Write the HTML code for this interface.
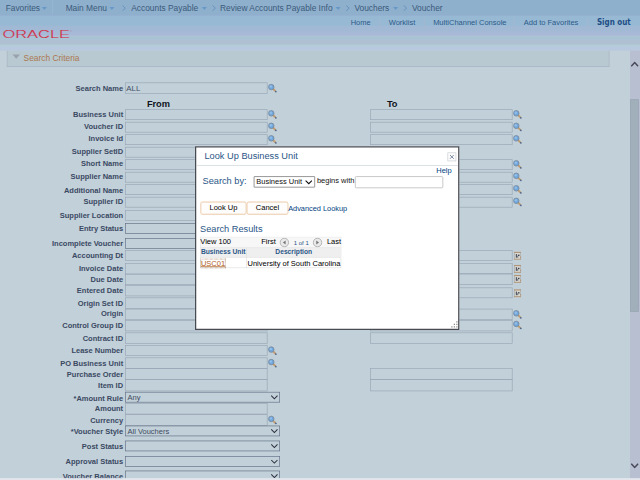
<!DOCTYPE html>
<html><head><meta charset="utf-8"><title>Voucher</title>
<style>
html,body{margin:0;padding:0;width:640px;height:480px;overflow:hidden;background:#c1d0d9}
#s{position:absolute;left:0;top:0;width:1024px;height:768px;transform:scale(.625);transform-origin:0 0;overflow:hidden;font-family:"Liberation Sans",Arial,sans-serif;font-size:12px;background:#c1d0d9}
#s *{box-sizing:border-box}
#hd{position:absolute;left:0;top:0;width:1024px;height:81px;background:linear-gradient(#8fb0cc 0,#8fb0cc 24px,#97b1d3 25px,#98b9d4 26.5px,#98b9d4 40px,#a1b9d4 43px,#a3b9d5 50px,#a8b9d7 53px,#a9b9d8 56px,#adc3d8 57.5px,#aac3d4 59px,#aac3d4 63px,#afc0d2 65px,#b0c0d3 70.5px,#b3cdd8 72px,#b3cdd8 74px,#b8c8de 75.5px,#b8c8de 81px)}
#nav{position:absolute;left:0;top:0;height:23px;width:1024px;font-size:13.4px;color:#3b5a7c;white-space:nowrap}
#nav span{position:absolute;top:5px}
#nav i{position:absolute;top:11.3px;width:0;height:0;border-left:4.6px solid transparent;border-right:4.6px solid transparent;border-top:5px solid #6698ca}
#nav b{position:absolute;top:5px;font-weight:normal;color:#5a84ad}
#lnk{position:absolute;top:29px;left:0;width:1024px;font-size:12px;color:#2c5a8a;white-space:nowrap}
#lnk span{position:absolute;top:0}
#lnk u{position:absolute;top:0;width:1.2px;height:15px;background:#a9b7cb}
.lb{position:absolute;left:0;width:197px;text-align:right;font-weight:bold;color:#3b4963;white-space:nowrap;line-height:14px}
.in{position:absolute;width:228px;height:17.4px;border:1.25px solid #98a3b4;color:#445066;line-height:18px;padding-left:1px;font-size:12.6px;overflow:hidden}
.se{position:absolute;width:248px;height:17px;border:1px solid #5f6a80;color:#3f4a60;line-height:16px;padding-left:3px;font-size:12px}
.ch{position:absolute;right:2px;top:4.4px}
.ic{position:absolute}
.hd2{position:absolute;font-weight:bold;font-size:14.8px;color:#10131c;top:158.2px}
#sc{position:absolute;left:11px;top:81px;width:964px;height:26px;background:#b9c9d1;border-left:1px solid #a9b3c4;border-bottom:1px solid #a3adc0;border-right:1px solid #a9b3c4}
#sc span{position:absolute;left:25.8px;top:4.6px;font-size:13.4px;color:#ab7850}
#sc i{position:absolute;left:8px;top:5.6px;width:0;height:0;border-left:6.5px solid transparent;border-right:6.5px solid transparent;border-top:7.5px solid #98a2ae}
#sb{position:absolute;left:1008px;top:81px;width:16px;height:687px;background:#b8bfd1}
#th{position:absolute;left:0px;top:77.5px;width:14.4px;height:340.3px;background:#a0afb9;border:1.2px solid #98a4b4}
#bt{position:absolute;left:0;top:764.8px;width:1024px;height:3.2px;background:#e3e5ec}
#dl{position:absolute;left:312px;top:234px;width:423px;height:294px;background:#fff;border:2px solid #484b52;color:#000}
#dl .ti{position:absolute;left:13.2px;top:6px;font-size:14.75px;color:#2a5687}
#dl .sep{position:absolute;left:0;top:28px;width:419px;height:1px;background:#c9d2d6}
#dl .x{position:absolute;left:402px;top:8px;width:14px;height:14px;border:1px solid #c8ccd2;background:#fbfbfb}
#dl a{color:#00427f;text-decoration:none}
.bt{position:absolute;height:20px;border:1px solid #e9c7a3;border-radius:3px;background:#fffdfb;text-align:center;line-height:17px;font-size:12px;color:#000;box-shadow:0 0 0 .5px #f3dcc4}
#tb{position:absolute;left:6px;top:143px;width:226px;height:50px;border:1px solid #dcdcdc}
</style></head><body>
<div id="s">
<div id="hd">
 <div id="nav">
  <span style="left:9px">Favorites</span><i style="left:67px"></i>
  <b style="left:84px;top:0;width:1px;height:23px;background:#9bbad6"></b>
  <span style="left:105px">Main Menu</span><i style="left:175px"></i>
  <svg style="position:absolute;left:194.5px;top:8.3px" width="7" height="10" viewBox="0 0 7 10"><path d="M1 0.8 L5.6 5 L1 9.2" fill="none" stroke="#5f8bb8" stroke-width="1.3"/></svg><span style="left:210px">Accounts Payable</span><i style="left:323px"></i>
  <svg style="position:absolute;left:338.5px;top:8.3px" width="7" height="10" viewBox="0 0 7 10"><path d="M1 0.8 L5.6 5 L1 9.2" fill="none" stroke="#5f8bb8" stroke-width="1.3"/></svg><span style="left:352px">Review Accounts Payable Info</span><i style="left:537px"></i>
  <svg style="position:absolute;left:552.5px;top:8.3px" width="7" height="10" viewBox="0 0 7 10"><path d="M1 0.8 L5.6 5 L1 9.2" fill="none" stroke="#5f8bb8" stroke-width="1.3"/></svg><span style="left:567px">Vouchers</span><i style="left:629px"></i>
  <svg style="position:absolute;left:644.5px;top:8.3px" width="7" height="10" viewBox="0 0 7 10"><path d="M1 0.8 L5.6 5 L1 9.2" fill="none" stroke="#5f8bb8" stroke-width="1.3"/></svg><span style="left:659px">Voucher</span>
 </div>
 <svg style="position:absolute;left:3px;top:45px" width="116" height="18" viewBox="0 0 116 18"><defs><linearGradient id="lg" x1="0" y1="0" x2="0" y2="1"><stop offset="0" stop-color="#a1b9d4"/><stop offset="1" stop-color="#aac3d4"/></linearGradient></defs><text x="1" y="15" font-family="Liberation Sans, Arial, sans-serif" font-size="18.5" fill="#d32841" stroke="url(#lg)" stroke-width="0.3" textLength="108" lengthAdjust="spacingAndGlyphs">ORACLE</text><text x="109" y="6" font-size="4" fill="#d32841" font-family="Liberation Sans, Arial, sans-serif">®</text></svg>
 <div id="lnk">
  <span style="left:561px">Home</span><u style="left:607px"></u>
  <span style="left:622px">Worklist</span><u style="left:678px"></u>
  <span style="left:693px">MultiChannel Console</span><u style="left:822px"></u>
  <span style="left:838px">Add to Favorites</span><u style="left:940px"></u>
  <span style="left:955px;top:-0.8px;font-family:'DejaVu Sans Condensed','DejaVu Sans',Verdana,sans-serif;font-weight:bold;font-size:12.8px;color:#1f4e86">Sign out</span>
 </div>
</div>
<div id="sc"><i></i><span>Search Criteria</span></div>
<div class="hd2" style="left:235px">From</div>
<div class="hd2" style="left:619px">To</div>
<div class="lb" style="top:134.8px">Search Name</div>
<div class="in" style="left:200px;top:132.1px;height:18px">ALL</div>
<svg class="ic" style="left:429px;top:133.3px" width="16" height="16" viewBox="0 0 16 16"><line x1="7.6" y1="9" x2="11.7" y2="12.9" stroke="#c09c70" stroke-width="3" stroke-linecap="round"/><line x1="12.1" y1="13.3" x2="12.5" y2="13.7" stroke="#4a6690" stroke-width="2.4" stroke-linecap="round"/><circle cx="5" cy="6.3" r="4.4" fill="#70a7dc" stroke="#7b899b" stroke-width="1.35"/><circle cx="4.3" cy="5.4" r="1.9" fill="#92bee8"/></svg>
<div class="lb" style="top:176.4px">Business Unit</div>
<div class="in" style="left:200px;top:175.1px;height:17.4px"></div>
<svg class="ic" style="left:429px;top:174.5px" width="16" height="16" viewBox="0 0 16 16"><line x1="7.6" y1="9" x2="11.7" y2="12.9" stroke="#c09c70" stroke-width="3" stroke-linecap="round"/><line x1="12.1" y1="13.3" x2="12.5" y2="13.7" stroke="#4a6690" stroke-width="2.4" stroke-linecap="round"/><circle cx="5" cy="6.3" r="4.4" fill="#70a7dc" stroke="#7b899b" stroke-width="1.35"/><circle cx="4.3" cy="5.4" r="1.9" fill="#92bee8"/></svg>
<div class="in" style="left:592px;top:175.1px;height:17.4px"></div>
<svg class="ic" style="left:821px;top:174.5px" width="16" height="16" viewBox="0 0 16 16"><line x1="7.6" y1="9" x2="11.7" y2="12.9" stroke="#c09c70" stroke-width="3" stroke-linecap="round"/><line x1="12.1" y1="13.3" x2="12.5" y2="13.7" stroke="#4a6690" stroke-width="2.4" stroke-linecap="round"/><circle cx="5" cy="6.3" r="4.4" fill="#70a7dc" stroke="#7b899b" stroke-width="1.35"/><circle cx="4.3" cy="5.4" r="1.9" fill="#92bee8"/></svg>
<div class="lb" style="top:195.4px">Voucher ID</div>
<div class="in" style="left:200px;top:195.1px;height:17.4px"></div>
<svg class="ic" style="left:429px;top:194.5px" width="16" height="16" viewBox="0 0 16 16"><line x1="7.6" y1="9" x2="11.7" y2="12.9" stroke="#c09c70" stroke-width="3" stroke-linecap="round"/><line x1="12.1" y1="13.3" x2="12.5" y2="13.7" stroke="#4a6690" stroke-width="2.4" stroke-linecap="round"/><circle cx="5" cy="6.3" r="4.4" fill="#70a7dc" stroke="#7b899b" stroke-width="1.35"/><circle cx="4.3" cy="5.4" r="1.9" fill="#92bee8"/></svg>
<div class="in" style="left:592px;top:195.1px;height:17.4px"></div>
<svg class="ic" style="left:821px;top:194.5px" width="16" height="16" viewBox="0 0 16 16"><line x1="7.6" y1="9" x2="11.7" y2="12.9" stroke="#c09c70" stroke-width="3" stroke-linecap="round"/><line x1="12.1" y1="13.3" x2="12.5" y2="13.7" stroke="#4a6690" stroke-width="2.4" stroke-linecap="round"/><circle cx="5" cy="6.3" r="4.4" fill="#70a7dc" stroke="#7b899b" stroke-width="1.35"/><circle cx="4.3" cy="5.4" r="1.9" fill="#92bee8"/></svg>
<div class="lb" style="top:215.4px">Invoice Id</div>
<div class="in" style="left:200px;top:215.1px;height:17.4px"></div>
<svg class="ic" style="left:429px;top:214.5px" width="16" height="16" viewBox="0 0 16 16"><line x1="7.6" y1="9" x2="11.7" y2="12.9" stroke="#c09c70" stroke-width="3" stroke-linecap="round"/><line x1="12.1" y1="13.3" x2="12.5" y2="13.7" stroke="#4a6690" stroke-width="2.4" stroke-linecap="round"/><circle cx="5" cy="6.3" r="4.4" fill="#70a7dc" stroke="#7b899b" stroke-width="1.35"/><circle cx="4.3" cy="5.4" r="1.9" fill="#92bee8"/></svg>
<div class="in" style="left:592px;top:215.1px;height:17.4px"></div>
<svg class="ic" style="left:821px;top:214.5px" width="16" height="16" viewBox="0 0 16 16"><line x1="7.6" y1="9" x2="11.7" y2="12.9" stroke="#c09c70" stroke-width="3" stroke-linecap="round"/><line x1="12.1" y1="13.3" x2="12.5" y2="13.7" stroke="#4a6690" stroke-width="2.4" stroke-linecap="round"/><circle cx="5" cy="6.3" r="4.4" fill="#70a7dc" stroke="#7b899b" stroke-width="1.35"/><circle cx="4.3" cy="5.4" r="1.9" fill="#92bee8"/></svg>
<div class="lb" style="top:235.4px">Supplier SetID</div>
<div class="in" style="left:200px;top:235.1px;height:17.4px"></div>
<svg class="ic" style="left:429px;top:234.5px" width="16" height="16" viewBox="0 0 16 16"><line x1="7.6" y1="9" x2="11.7" y2="12.9" stroke="#c09c70" stroke-width="3" stroke-linecap="round"/><line x1="12.1" y1="13.3" x2="12.5" y2="13.7" stroke="#4a6690" stroke-width="2.4" stroke-linecap="round"/><circle cx="5" cy="6.3" r="4.4" fill="#70a7dc" stroke="#7b899b" stroke-width="1.35"/><circle cx="4.3" cy="5.4" r="1.9" fill="#92bee8"/></svg>
<div class="lb" style="top:255px">Short Name</div>
<div class="in" style="left:200px;top:255.1px;height:17.4px"></div>
<svg class="ic" style="left:429px;top:254.5px" width="16" height="16" viewBox="0 0 16 16"><line x1="7.6" y1="9" x2="11.7" y2="12.9" stroke="#c09c70" stroke-width="3" stroke-linecap="round"/><line x1="12.1" y1="13.3" x2="12.5" y2="13.7" stroke="#4a6690" stroke-width="2.4" stroke-linecap="round"/><circle cx="5" cy="6.3" r="4.4" fill="#70a7dc" stroke="#7b899b" stroke-width="1.35"/><circle cx="4.3" cy="5.4" r="1.9" fill="#92bee8"/></svg>
<div class="in" style="left:592px;top:255.1px;height:17.4px"></div>
<svg class="ic" style="left:821px;top:254.5px" width="16" height="16" viewBox="0 0 16 16"><line x1="7.6" y1="9" x2="11.7" y2="12.9" stroke="#c09c70" stroke-width="3" stroke-linecap="round"/><line x1="12.1" y1="13.3" x2="12.5" y2="13.7" stroke="#4a6690" stroke-width="2.4" stroke-linecap="round"/><circle cx="5" cy="6.3" r="4.4" fill="#70a7dc" stroke="#7b899b" stroke-width="1.35"/><circle cx="4.3" cy="5.4" r="1.9" fill="#92bee8"/></svg>
<div class="lb" style="top:275.4px">Supplier Name</div>
<div class="in" style="left:200px;top:275.1px;height:17.4px"></div>
<svg class="ic" style="left:429px;top:274.5px" width="16" height="16" viewBox="0 0 16 16"><line x1="7.6" y1="9" x2="11.7" y2="12.9" stroke="#c09c70" stroke-width="3" stroke-linecap="round"/><line x1="12.1" y1="13.3" x2="12.5" y2="13.7" stroke="#4a6690" stroke-width="2.4" stroke-linecap="round"/><circle cx="5" cy="6.3" r="4.4" fill="#70a7dc" stroke="#7b899b" stroke-width="1.35"/><circle cx="4.3" cy="5.4" r="1.9" fill="#92bee8"/></svg>
<div class="in" style="left:592px;top:275.1px;height:17.4px"></div>
<svg class="ic" style="left:821px;top:274.5px" width="16" height="16" viewBox="0 0 16 16"><line x1="7.6" y1="9" x2="11.7" y2="12.9" stroke="#c09c70" stroke-width="3" stroke-linecap="round"/><line x1="12.1" y1="13.3" x2="12.5" y2="13.7" stroke="#4a6690" stroke-width="2.4" stroke-linecap="round"/><circle cx="5" cy="6.3" r="4.4" fill="#70a7dc" stroke="#7b899b" stroke-width="1.35"/><circle cx="4.3" cy="5.4" r="1.9" fill="#92bee8"/></svg>
<div class="lb" style="top:296.6px">Additional Name</div>
<div class="in" style="left:200px;top:295.1px;height:17.4px"></div>
<svg class="ic" style="left:429px;top:294.5px" width="16" height="16" viewBox="0 0 16 16"><line x1="7.6" y1="9" x2="11.7" y2="12.9" stroke="#c09c70" stroke-width="3" stroke-linecap="round"/><line x1="12.1" y1="13.3" x2="12.5" y2="13.7" stroke="#4a6690" stroke-width="2.4" stroke-linecap="round"/><circle cx="5" cy="6.3" r="4.4" fill="#70a7dc" stroke="#7b899b" stroke-width="1.35"/><circle cx="4.3" cy="5.4" r="1.9" fill="#92bee8"/></svg>
<div class="in" style="left:592px;top:295.1px;height:17.4px"></div>
<svg class="ic" style="left:821px;top:294.5px" width="16" height="16" viewBox="0 0 16 16"><line x1="7.6" y1="9" x2="11.7" y2="12.9" stroke="#c09c70" stroke-width="3" stroke-linecap="round"/><line x1="12.1" y1="13.3" x2="12.5" y2="13.7" stroke="#4a6690" stroke-width="2.4" stroke-linecap="round"/><circle cx="5" cy="6.3" r="4.4" fill="#70a7dc" stroke="#7b899b" stroke-width="1.35"/><circle cx="4.3" cy="5.4" r="1.9" fill="#92bee8"/></svg>
<div class="lb" style="top:316px">Supplier ID</div>
<div class="in" style="left:200px;top:315.1px;height:17.4px"></div>
<svg class="ic" style="left:429px;top:314.5px" width="16" height="16" viewBox="0 0 16 16"><line x1="7.6" y1="9" x2="11.7" y2="12.9" stroke="#c09c70" stroke-width="3" stroke-linecap="round"/><line x1="12.1" y1="13.3" x2="12.5" y2="13.7" stroke="#4a6690" stroke-width="2.4" stroke-linecap="round"/><circle cx="5" cy="6.3" r="4.4" fill="#70a7dc" stroke="#7b899b" stroke-width="1.35"/><circle cx="4.3" cy="5.4" r="1.9" fill="#92bee8"/></svg>
<div class="in" style="left:592px;top:315.1px;height:17.4px"></div>
<svg class="ic" style="left:821px;top:314.5px" width="16" height="16" viewBox="0 0 16 16"><line x1="7.6" y1="9" x2="11.7" y2="12.9" stroke="#c09c70" stroke-width="3" stroke-linecap="round"/><line x1="12.1" y1="13.3" x2="12.5" y2="13.7" stroke="#4a6690" stroke-width="2.4" stroke-linecap="round"/><circle cx="5" cy="6.3" r="4.4" fill="#70a7dc" stroke="#7b899b" stroke-width="1.35"/><circle cx="4.3" cy="5.4" r="1.9" fill="#92bee8"/></svg>
<div class="lb" style="top:337.2px">Supplier Location</div>
<div class="in" style="left:200px;top:336.1px;height:17.4px"></div>
<svg class="ic" style="left:429px;top:335.5px" width="16" height="16" viewBox="0 0 16 16"><line x1="7.6" y1="9" x2="11.7" y2="12.9" stroke="#c09c70" stroke-width="3" stroke-linecap="round"/><line x1="12.1" y1="13.3" x2="12.5" y2="13.7" stroke="#4a6690" stroke-width="2.4" stroke-linecap="round"/><circle cx="5" cy="6.3" r="4.4" fill="#70a7dc" stroke="#7b899b" stroke-width="1.35"/><circle cx="4.3" cy="5.4" r="1.9" fill="#92bee8"/></svg>
<div class="lb" style="top:359px">Entry Status</div>
<div class="se" style="left:200px;top:357px"><svg class="ch" width="12" height="8" viewBox="0 0 12 8"><path d="M1 1 L6 6 L11 1" fill="none" stroke="#2c2f3d" stroke-width="1.65"/></svg></div>
<div class="lb" style="top:383px">Incomplete Voucher</div>
<div class="se" style="left:200px;top:381px"><svg class="ch" width="12" height="8" viewBox="0 0 12 8"><path d="M1 1 L6 6 L11 1" fill="none" stroke="#2c2f3d" stroke-width="1.65"/></svg></div>
<div class="lb" style="top:401.4px">Accounting Dt</div>
<div class="in" style="left:200px;top:400.1px;height:17.4px"></div>
<svg class="ic" style="left:430px;top:402px" width="13" height="15" viewBox="0 0 13 15"><rect x="0.4" y="0.9" width="11.2" height="12.6" fill="#dad9d1"/><rect x="0.4" y="0.9" width="1.2" height="12.6" fill="#a9acb0"/><rect x="10.4" y="0.9" width="1.2" height="12.6" fill="#a9acb0"/><rect x="0.4" y="0.9" width="11.2" height="1.9" fill="#b0957a"/><rect x="0.4" y="11.9" width="11.2" height="1.6" fill="#b0957a"/><rect x="10" y="8.4" width="1.8" height="2.6" fill="#b59a80"/><rect x="3.3" y="4.5" width="1.7" height="5.8" fill="#414757"/><rect x="6.6" y="5.4" width="2.6" height="2.2" fill="#414757"/><rect x="5.6" y="7.4" width="1.6" height="2.9" fill="#5f6574"/></svg>
<div class="in" style="left:592px;top:400.1px;height:17.4px"></div>
<svg class="ic" style="left:822px;top:402.0px" width="13" height="15" viewBox="0 0 13 15"><rect x="0.4" y="0.9" width="11.2" height="12.6" fill="#dad9d1"/><rect x="0.4" y="0.9" width="1.2" height="12.6" fill="#a9acb0"/><rect x="10.4" y="0.9" width="1.2" height="12.6" fill="#a9acb0"/><rect x="0.4" y="0.9" width="11.2" height="1.9" fill="#b0957a"/><rect x="0.4" y="11.9" width="11.2" height="1.6" fill="#b0957a"/><rect x="10" y="8.4" width="1.8" height="2.6" fill="#b59a80"/><rect x="3.3" y="4.5" width="1.7" height="5.8" fill="#414757"/><rect x="6.6" y="5.4" width="2.6" height="2.2" fill="#414757"/><rect x="5.6" y="7.4" width="1.6" height="2.9" fill="#5f6574"/></svg>
<div class="lb" style="top:423.4px">Invoice Date</div>
<div class="in" style="left:200px;top:421.1px;height:17.6px"></div>
<svg class="ic" style="left:430px;top:422.2px" width="13" height="15" viewBox="0 0 13 15"><rect x="0.4" y="0.9" width="11.2" height="12.6" fill="#dad9d1"/><rect x="0.4" y="0.9" width="1.2" height="12.6" fill="#a9acb0"/><rect x="10.4" y="0.9" width="1.2" height="12.6" fill="#a9acb0"/><rect x="0.4" y="0.9" width="11.2" height="1.9" fill="#b0957a"/><rect x="0.4" y="11.9" width="11.2" height="1.6" fill="#b0957a"/><rect x="10" y="8.4" width="1.8" height="2.6" fill="#b59a80"/><rect x="3.3" y="4.5" width="1.7" height="5.8" fill="#414757"/><rect x="6.6" y="5.4" width="2.6" height="2.2" fill="#414757"/><rect x="5.6" y="7.4" width="1.6" height="2.9" fill="#5f6574"/></svg>
<div class="in" style="left:592px;top:421.1px;height:17.6px"></div>
<svg class="ic" style="left:822px;top:423.0px" width="13" height="15" viewBox="0 0 13 15"><rect x="0.4" y="0.9" width="11.2" height="12.6" fill="#dad9d1"/><rect x="0.4" y="0.9" width="1.2" height="12.6" fill="#a9acb0"/><rect x="10.4" y="0.9" width="1.2" height="12.6" fill="#a9acb0"/><rect x="0.4" y="0.9" width="11.2" height="1.9" fill="#b0957a"/><rect x="0.4" y="11.9" width="11.2" height="1.6" fill="#b0957a"/><rect x="10" y="8.4" width="1.8" height="2.6" fill="#b59a80"/><rect x="3.3" y="4.5" width="1.7" height="5.8" fill="#414757"/><rect x="6.6" y="5.4" width="2.6" height="2.2" fill="#414757"/><rect x="5.6" y="7.4" width="1.6" height="2.9" fill="#5f6574"/></svg>
<div class="lb" style="top:440px">Due Date</div>
<div class="in" style="left:200px;top:437.6px;height:18.4px"></div>
<svg class="ic" style="left:430px;top:439.5px" width="13" height="15" viewBox="0 0 13 15"><rect x="0.4" y="0.9" width="11.2" height="12.6" fill="#dad9d1"/><rect x="0.4" y="0.9" width="1.2" height="12.6" fill="#a9acb0"/><rect x="10.4" y="0.9" width="1.2" height="12.6" fill="#a9acb0"/><rect x="0.4" y="0.9" width="11.2" height="1.9" fill="#b0957a"/><rect x="0.4" y="11.9" width="11.2" height="1.6" fill="#b0957a"/><rect x="10" y="8.4" width="1.8" height="2.6" fill="#b59a80"/><rect x="3.3" y="4.5" width="1.7" height="5.8" fill="#414757"/><rect x="6.6" y="5.4" width="2.6" height="2.2" fill="#414757"/><rect x="5.6" y="7.4" width="1.6" height="2.9" fill="#5f6574"/></svg>
<div class="in" style="left:592px;top:437.4px;height:18.2px"></div>
<svg class="ic" style="left:822px;top:439.3px" width="13" height="15" viewBox="0 0 13 15"><rect x="0.4" y="0.9" width="11.2" height="12.6" fill="#dad9d1"/><rect x="0.4" y="0.9" width="1.2" height="12.6" fill="#a9acb0"/><rect x="10.4" y="0.9" width="1.2" height="12.6" fill="#a9acb0"/><rect x="0.4" y="0.9" width="11.2" height="1.9" fill="#b0957a"/><rect x="0.4" y="11.9" width="11.2" height="1.6" fill="#b0957a"/><rect x="10" y="8.4" width="1.8" height="2.6" fill="#b59a80"/><rect x="3.3" y="4.5" width="1.7" height="5.8" fill="#414757"/><rect x="6.6" y="5.4" width="2.6" height="2.2" fill="#414757"/><rect x="5.6" y="7.4" width="1.6" height="2.9" fill="#5f6574"/></svg>
<div class="lb" style="top:457px">Entered Date</div>
<div class="in" style="left:200px;top:455.5px;height:18.4px"></div>
<svg class="ic" style="left:430px;top:457px" width="13" height="15" viewBox="0 0 13 15"><rect x="0.4" y="0.9" width="11.2" height="12.6" fill="#dad9d1"/><rect x="0.4" y="0.9" width="1.2" height="12.6" fill="#a9acb0"/><rect x="10.4" y="0.9" width="1.2" height="12.6" fill="#a9acb0"/><rect x="0.4" y="0.9" width="11.2" height="1.9" fill="#b0957a"/><rect x="0.4" y="11.9" width="11.2" height="1.6" fill="#b0957a"/><rect x="10" y="8.4" width="1.8" height="2.6" fill="#b59a80"/><rect x="3.3" y="4.5" width="1.7" height="5.8" fill="#414757"/><rect x="6.6" y="5.4" width="2.6" height="2.2" fill="#414757"/><rect x="5.6" y="7.4" width="1.6" height="2.9" fill="#5f6574"/></svg>
<div class="in" style="left:592px;top:459.7px;height:17.4px"></div>
<svg class="ic" style="left:822px;top:461.6px" width="13" height="15" viewBox="0 0 13 15"><rect x="0.4" y="0.9" width="11.2" height="12.6" fill="#dad9d1"/><rect x="0.4" y="0.9" width="1.2" height="12.6" fill="#a9acb0"/><rect x="10.4" y="0.9" width="1.2" height="12.6" fill="#a9acb0"/><rect x="0.4" y="0.9" width="11.2" height="1.9" fill="#b0957a"/><rect x="0.4" y="11.9" width="11.2" height="1.6" fill="#b0957a"/><rect x="10" y="8.4" width="1.8" height="2.6" fill="#b59a80"/><rect x="3.3" y="4.5" width="1.7" height="5.8" fill="#414757"/><rect x="6.6" y="5.4" width="2.6" height="2.2" fill="#414757"/><rect x="5.6" y="7.4" width="1.6" height="2.9" fill="#5f6574"/></svg>
<div class="lb" style="top:478.2px">Origin Set ID</div>
<div class="in" style="left:200px;top:475.6px;height:18.4px"></div>
<svg class="ic" style="left:429px;top:474.5px" width="16" height="16" viewBox="0 0 16 16"><line x1="7.6" y1="9" x2="11.7" y2="12.9" stroke="#c09c70" stroke-width="3" stroke-linecap="round"/><line x1="12.1" y1="13.3" x2="12.5" y2="13.7" stroke="#4a6690" stroke-width="2.4" stroke-linecap="round"/><circle cx="5" cy="6.3" r="4.4" fill="#70a7dc" stroke="#7b899b" stroke-width="1.35"/><circle cx="4.3" cy="5.4" r="1.9" fill="#92bee8"/></svg>
<div class="lb" style="top:494.8px">Origin</div>
<div class="in" style="left:200px;top:493.6px;height:18.4px"></div>
<svg class="ic" style="left:429px;top:494.7px" width="16" height="16" viewBox="0 0 16 16"><line x1="7.6" y1="9" x2="11.7" y2="12.9" stroke="#c09c70" stroke-width="3" stroke-linecap="round"/><line x1="12.1" y1="13.3" x2="12.5" y2="13.7" stroke="#4a6690" stroke-width="2.4" stroke-linecap="round"/><circle cx="5" cy="6.3" r="4.4" fill="#70a7dc" stroke="#7b899b" stroke-width="1.35"/><circle cx="4.3" cy="5.4" r="1.9" fill="#92bee8"/></svg>
<div class="in" style="left:592px;top:493.6px;height:18.4px"></div>
<svg class="ic" style="left:821px;top:494.7px" width="16" height="16" viewBox="0 0 16 16"><line x1="7.6" y1="9" x2="11.7" y2="12.9" stroke="#c09c70" stroke-width="3" stroke-linecap="round"/><line x1="12.1" y1="13.3" x2="12.5" y2="13.7" stroke="#4a6690" stroke-width="2.4" stroke-linecap="round"/><circle cx="5" cy="6.3" r="4.4" fill="#70a7dc" stroke="#7b899b" stroke-width="1.35"/><circle cx="4.3" cy="5.4" r="1.9" fill="#92bee8"/></svg>
<div class="lb" style="top:514.4px">Control Group ID</div>
<div class="in" style="left:200px;top:511.8px;height:17.8px"></div>
<svg class="ic" style="left:429px;top:512.2px" width="16" height="16" viewBox="0 0 16 16"><line x1="7.6" y1="9" x2="11.7" y2="12.9" stroke="#c09c70" stroke-width="3" stroke-linecap="round"/><line x1="12.1" y1="13.3" x2="12.5" y2="13.7" stroke="#4a6690" stroke-width="2.4" stroke-linecap="round"/><circle cx="5" cy="6.3" r="4.4" fill="#70a7dc" stroke="#7b899b" stroke-width="1.35"/><circle cx="4.3" cy="5.4" r="1.9" fill="#92bee8"/></svg>
<div class="in" style="left:592px;top:511.8px;height:17.8px"></div>
<svg class="ic" style="left:821px;top:512.2px" width="16" height="16" viewBox="0 0 16 16"><line x1="7.6" y1="9" x2="11.7" y2="12.9" stroke="#c09c70" stroke-width="3" stroke-linecap="round"/><line x1="12.1" y1="13.3" x2="12.5" y2="13.7" stroke="#4a6690" stroke-width="2.4" stroke-linecap="round"/><circle cx="5" cy="6.3" r="4.4" fill="#70a7dc" stroke="#7b899b" stroke-width="1.35"/><circle cx="4.3" cy="5.4" r="1.9" fill="#92bee8"/></svg>
<div class="lb" style="top:533.8px">Contract ID</div>
<div class="in" style="left:200px;top:531.6px;height:18.2px"></div>
<div class="in" style="left:592px;top:531.6px;height:18.2px"></div>
<div class="lb" style="top:554px">Lease Number</div>
<div class="in" style="left:200px;top:552.1px;height:17.4px"></div>
<svg class="ic" style="left:429px;top:552.5px" width="16" height="16" viewBox="0 0 16 16"><line x1="7.6" y1="9" x2="11.7" y2="12.9" stroke="#c09c70" stroke-width="3" stroke-linecap="round"/><line x1="12.1" y1="13.3" x2="12.5" y2="13.7" stroke="#4a6690" stroke-width="2.4" stroke-linecap="round"/><circle cx="5" cy="6.3" r="4.4" fill="#70a7dc" stroke="#7b899b" stroke-width="1.35"/><circle cx="4.3" cy="5.4" r="1.9" fill="#92bee8"/></svg>
<div class="lb" style="top:574px">PO Business Unit</div>
<div class="in" style="left:200px;top:571.9px;height:18.5px"></div>
<svg class="ic" style="left:429px;top:573.4px" width="16" height="16" viewBox="0 0 16 16"><line x1="7.6" y1="9" x2="11.7" y2="12.9" stroke="#c09c70" stroke-width="3" stroke-linecap="round"/><line x1="12.1" y1="13.3" x2="12.5" y2="13.7" stroke="#4a6690" stroke-width="2.4" stroke-linecap="round"/><circle cx="5" cy="6.3" r="4.4" fill="#70a7dc" stroke="#7b899b" stroke-width="1.35"/><circle cx="4.3" cy="5.4" r="1.9" fill="#92bee8"/></svg>
<div class="lb" style="top:592px">Purchase Order</div>
<div class="in" style="left:200px;top:589.4px;height:18.5px"></div>
<div class="in" style="left:592px;top:589.4px;height:18.5px"></div>
<div class="lb" style="top:608.8px">Item ID</div>
<div class="in" style="left:200px;top:607.0px;height:18.5px"></div>
<div class="in" style="left:592px;top:607.0px;height:18.5px"></div>
<div class="lb" style="top:629.5px">*Amount Rule</div>
<div class="se" style="left:200px;top:626.7px">Any<svg class="ch" width="12" height="8" viewBox="0 0 12 8"><path d="M1 1 L6 6 L11 1" fill="none" stroke="#2c2f3d" stroke-width="1.65"/></svg></div>
<div class="lb" style="top:647px">Amount</div>
<div class="in" style="left:200px;top:644.5px;height:18.6px"></div>
<div class="lb" style="top:665.4px">Currency</div>
<div class="in" style="left:200px;top:662.5px;height:18.6px"></div>
<svg class="ic" style="left:429px;top:664px" width="16" height="16" viewBox="0 0 16 16"><line x1="7.6" y1="9" x2="11.7" y2="12.9" stroke="#c09c70" stroke-width="3" stroke-linecap="round"/><line x1="12.1" y1="13.3" x2="12.5" y2="13.7" stroke="#4a6690" stroke-width="2.4" stroke-linecap="round"/><circle cx="5" cy="6.3" r="4.4" fill="#70a7dc" stroke="#7b899b" stroke-width="1.35"/><circle cx="4.3" cy="5.4" r="1.9" fill="#92bee8"/></svg>
<div class="lb" style="top:683.8px">*Voucher Style</div>
<div class="se" style="left:200px;top:681px">All Vouchers<svg class="ch" width="12" height="8" viewBox="0 0 12 8"><path d="M1 1 L6 6 L11 1" fill="none" stroke="#2c2f3d" stroke-width="1.65"/></svg></div>
<div class="lb" style="top:708.2px">Post Status</div>
<div class="se" style="left:200px;top:705px"><svg class="ch" width="12" height="8" viewBox="0 0 12 8"><path d="M1 1 L6 6 L11 1" fill="none" stroke="#2c2f3d" stroke-width="1.65"/></svg></div>
<div class="lb" style="top:731.7px">Approval Status</div>
<div class="se" style="left:200px;top:729.5px"><svg class="ch" width="12" height="8" viewBox="0 0 12 8"><path d="M1 1 L6 6 L11 1" fill="none" stroke="#2c2f3d" stroke-width="1.65"/></svg></div>
<div class="lb" style="top:755.6px">Voucher Balance</div>
<div class="se" style="left:200px;top:753px"><svg class="ch" width="12" height="8" viewBox="0 0 12 8"><path d="M1 1 L6 6 L11 1" fill="none" stroke="#2c2f3d" stroke-width="1.65"/></svg></div>
<div id="sb"><div id="th"></div>
 <svg style="position:absolute;left:1px;top:17px" width="13" height="10" viewBox="0 0 13 10"><path d="M1 8 L6.5 2 L12 8" fill="none" stroke="#484858" stroke-width="2.4"/></svg>
 <svg style="position:absolute;left:1px;top:659px" width="13" height="10" viewBox="0 0 13 10"><path d="M1 2 L6.5 8 L12 2" fill="none" stroke="#484858" stroke-width="2.4"/></svg>
</div>
<div id="bt"></div>
<div id="dl">
 <div class="ti">Look Up Business Unit</div>
 <div class="x"><svg width="12" height="12" viewBox="0 0 12 12" style="position:absolute;left:0;top:0"><path d="M3 3 L9 9 M9 3 L3 9" stroke="#7d8aa0" stroke-width="1.6" fill="none"/></svg></div>
 <div class="sep"></div>
 <a style="position:absolute;left:384px;top:28.5px;font-size:12px">Help</a>
 <div style="position:absolute;left:10px;top:45px;font-size:14.75px;color:#2a5687">Search by:</div>
 <div style="position:absolute;left:92px;top:46px;width:98px;height:18px;border:1px solid #5c5c5c;border-radius:1px;font-size:12px;line-height:16px;padding-left:3px;color:#111;background:#fff">Business Unit<svg style="position:absolute;right:3px;top:5px" width="12" height="8" viewBox="0 0 12 8"><path d="M1 1 L6 6 L11 1" fill="none" stroke="#111" stroke-width="1.7"/></svg></div>
 <div style="position:absolute;left:193px;top:46px;font-size:12px;color:#111">begins with</div>
 <div style="position:absolute;left:254px;top:46px;width:141px;height:19px;border:1px solid #a9a9a9;border-radius:2px;background:#fff"></div>
 <div class="bt" style="left:7px;top:87px;width:73px">Look Up</div>
 <div class="bt" style="left:81px;top:87px;width:66px">Cancel</div>
 <a style="position:absolute;left:147px;top:90px;font-size:11.8px">Advanced Lookup</a>
 <div style="position:absolute;left:6px;top:122px;font-size:14.75px;color:#2a5687">Search Results</div>
 <div id="tb">
  <div style="position:absolute;left:0;top:0;width:224px;height:16px;background:#f7f7f7"></div>
  <div style="position:absolute;left:0;top:15.5px;width:224px;height:16px;background:#efefef;border-top:1px solid #e2e2e2;border-bottom:1px solid #e2e2e2"></div>
  <div style="position:absolute;left:73px;top:16px;width:1px;height:33px;background:#dedede"></div>
  <span style="position:absolute;left:-0.5px;top:-0.5px;font-size:12px">View 100</span>
  <span style="position:absolute;left:97px;top:-0.5px;font-size:12px">First</span>
  <svg style="position:absolute;left:126px;top:0" width="16" height="16" viewBox="0 0 16 16"><circle cx="8" cy="8" r="6.8" fill="#e9e9e9" stroke="#9c9c9c" stroke-width="1.1"/><path d="M10 4.8 L5.6 8 L10 11.2 Z" fill="#777"/></svg>
  <span style="position:absolute;left:149px;top:3px;font-size:9.6px;color:#2a5687">1 of 1</span>
  <svg style="position:absolute;left:179px;top:0" width="16" height="16" viewBox="0 0 16 16"><circle cx="8" cy="8" r="6.8" fill="#e9e9e9" stroke="#9c9c9c" stroke-width="1.1"/><path d="M6 4.8 L10.4 8 L6 11.2 Z" fill="#777"/></svg>
  <span style="position:absolute;left:202px;top:-0.5px;font-size:12px">Last</span>
  <span style="position:absolute;left:0.5px;top:17px;font-size:10.7px;font-weight:bold;color:#2a5687">Business Unit</span>
  <span style="position:absolute;left:74px;top:17px;width:150px;text-align:center;font-size:10.7px;font-weight:bold;color:#2a5687">Description</span>
  <span style="position:absolute;left:0.5px;top:35.2px;font-size:12px;line-height:13px;color:#b2601f;text-decoration:underline;outline:1px dotted #8a5a30">USC01</span>
  <span style="position:absolute;left:75px;top:34.6px;font-size:12px;white-space:nowrap">University of South Carolina</span>
 </div>
 <svg style="position:absolute;left:406.5px;top:276.5px" width="13" height="13" viewBox="0 0 13 13"><g fill="#8a8a8a"><rect x="9" y="1" width="2" height="2"/><rect x="5" y="5" width="2" height="2"/><rect x="9" y="5" width="2" height="2"/><rect x="1" y="9" width="2" height="2"/><rect x="5" y="9" width="2" height="2"/><rect x="9" y="9" width="2" height="2"/></g></svg>
</div>
</div>
</body></html>
